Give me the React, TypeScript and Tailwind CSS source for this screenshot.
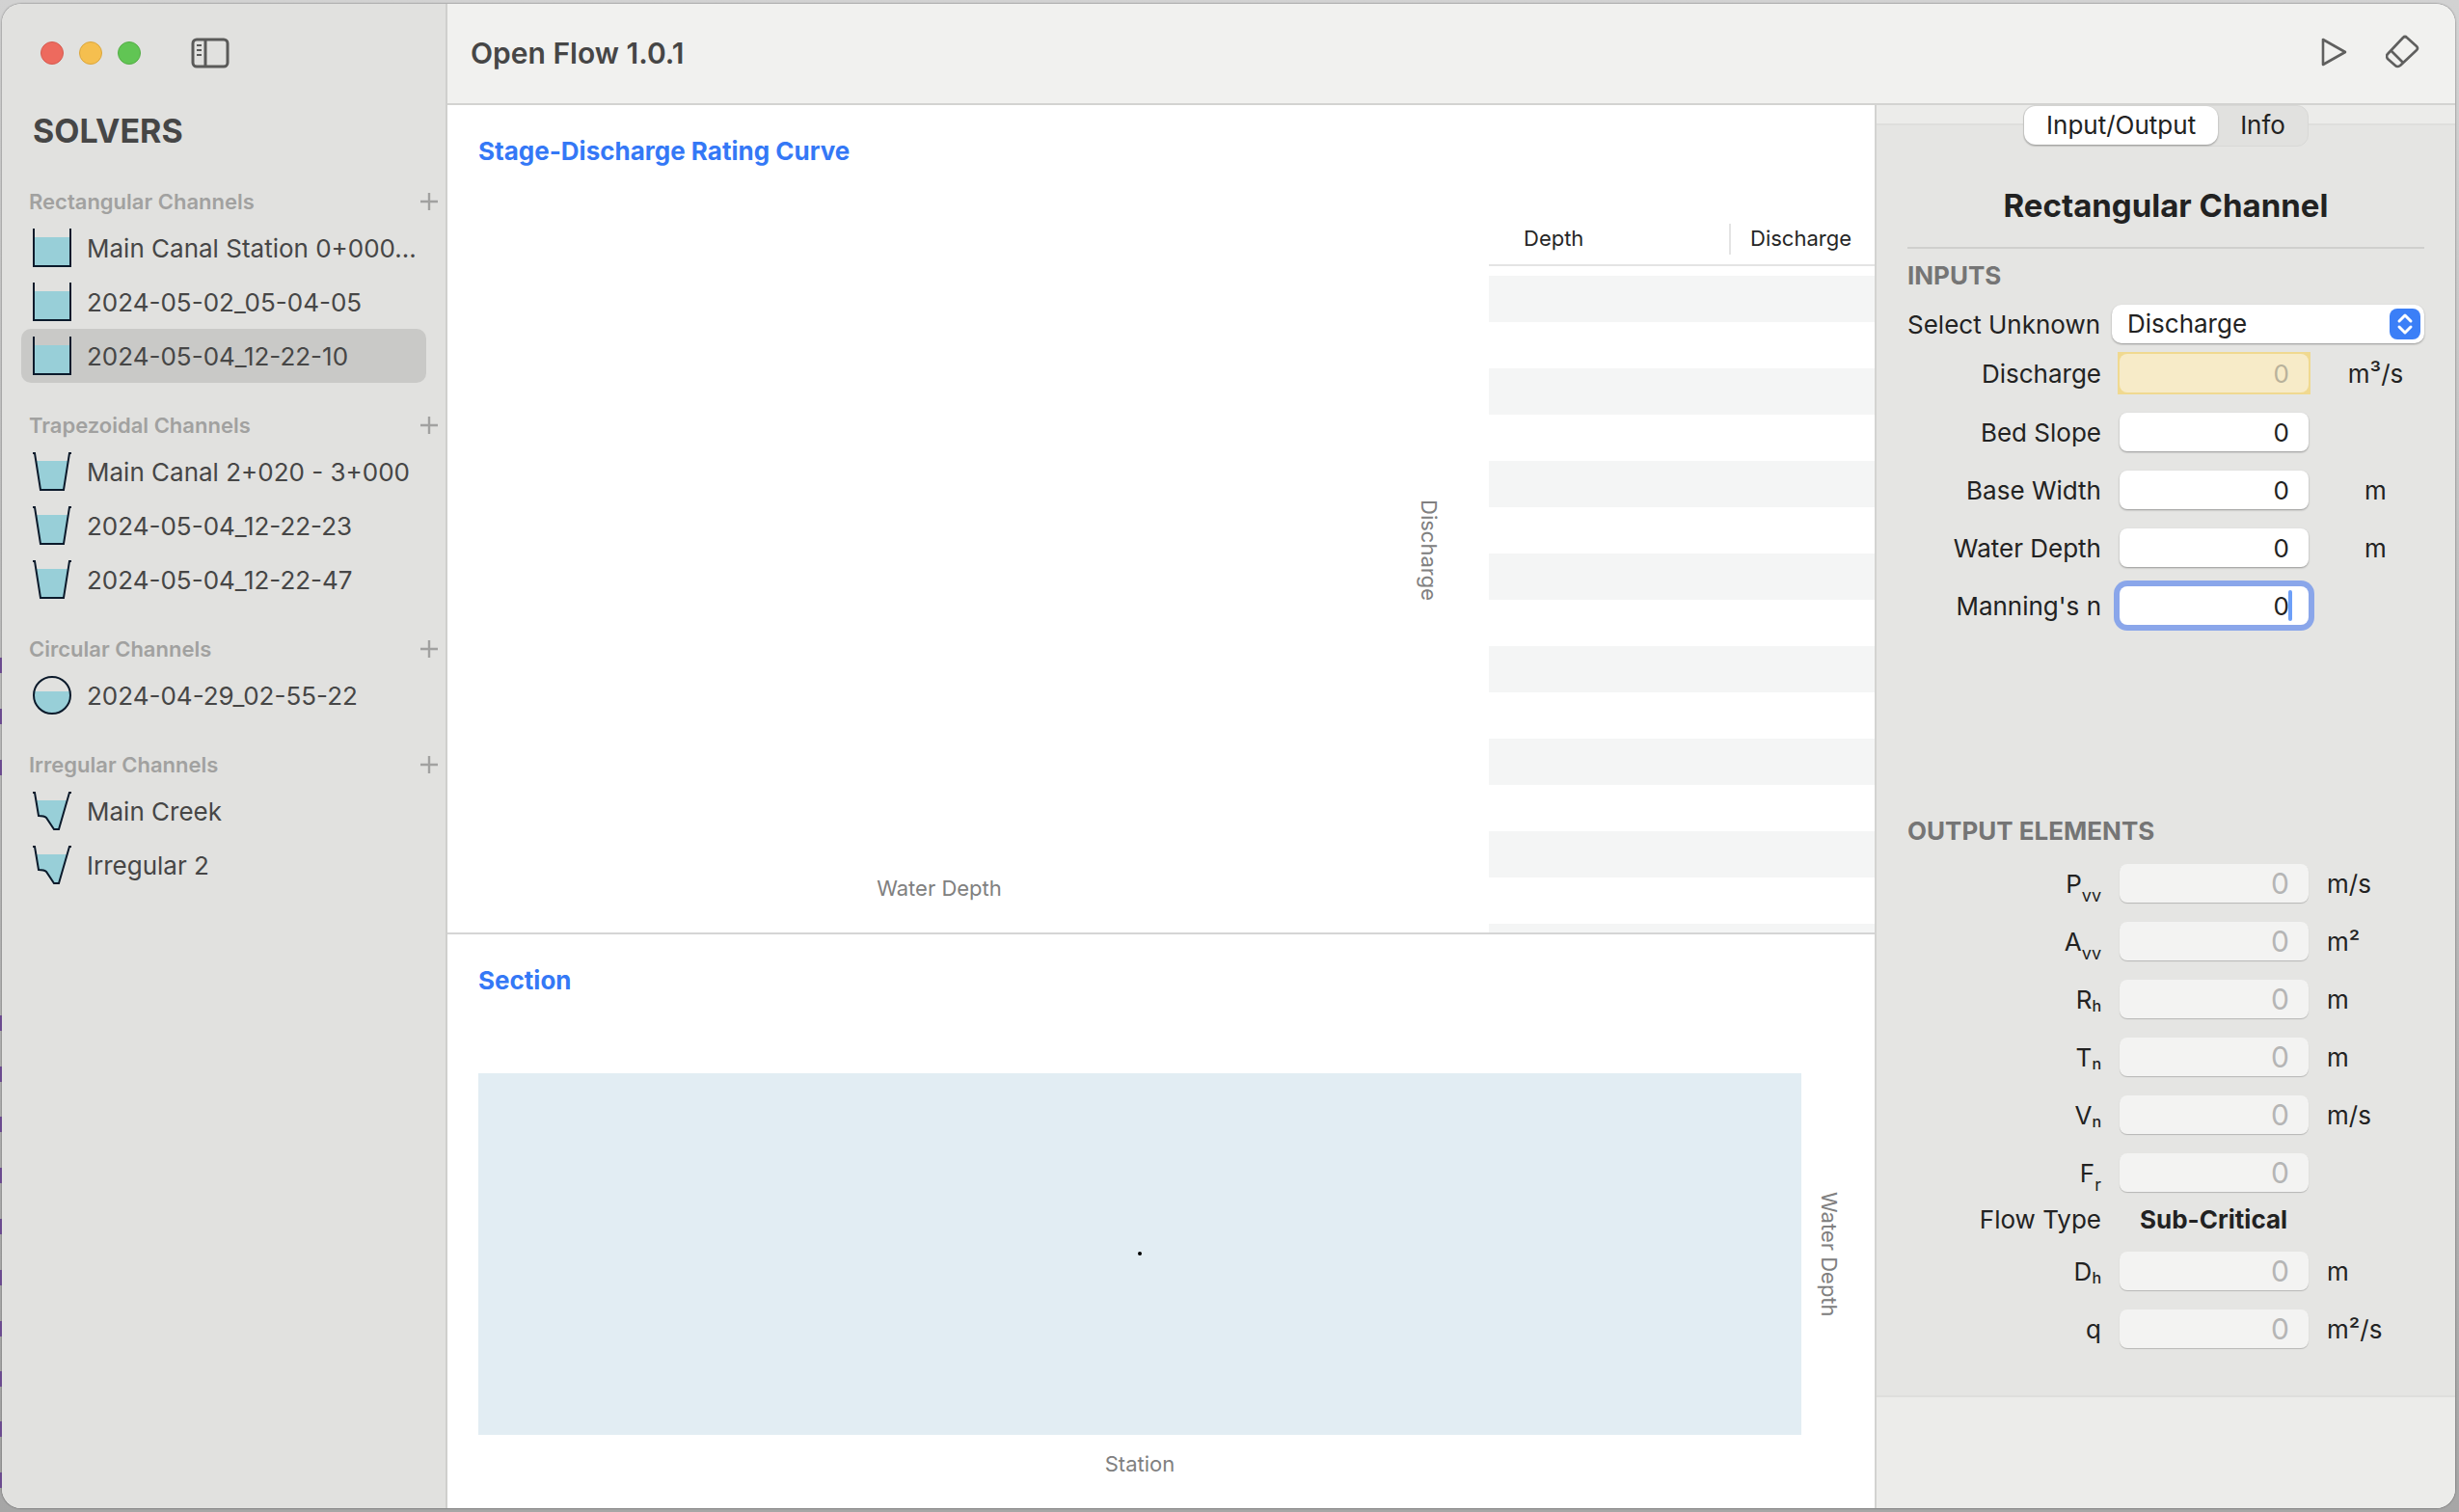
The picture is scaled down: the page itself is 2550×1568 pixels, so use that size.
import { useState } from 'react';
import type { ReactNode } from 'react';

type Shape = 'rect' | 'trapezoid' | 'circle' | 'irregular';

const groups: { title: string; shape: Shape; items: string[] }[] = [
  {
    title: 'Rectangular Channels',
    shape: 'rect',
    items: ['Main Canal Station 0+000...', '2024-05-02_05-04-05', '2024-05-04_12-22-10'],
  },
  {
    title: 'Trapezoidal Channels',
    shape: 'trapezoid',
    items: ['Main Canal 2+020 - 3+000', '2024-05-04_12-22-23', '2024-05-04_12-22-47'],
  },
  { title: 'Circular Channels', shape: 'circle', items: ['2024-04-29_02-55-22'] },
  { title: 'Irregular Channels', shape: 'irregular', items: ['Main Creek', 'Irregular 2'] },
];

const inputs = [
  { id: 'bed-slope', label: 'Bed Slope', unit: '' },
  { id: 'base-width', label: 'Base Width', unit: 'm' },
  { id: 'water-depth', label: 'Water Depth', unit: 'm' },
  { id: 'manning', label: "Manning's n", unit: '' },
];

const low = 'relative top-[9px] text-[18px] leading-none';
const small = 'relative top-[3px] text-[16px] font-medium leading-none';

const outputs: { id: string; label: ReactNode; unit: string }[] = [
  { id: 'perimeter', label: <>P<span className={low}>vv</span></>, unit: 'm/s' },
  { id: 'area', label: <>A<span className={low}>vv</span></>, unit: 'm²' },
  { id: 'radius', label: <>R<span className={small}>h</span></>, unit: 'm' },
  { id: 'top-width', label: <>T<span className={small}>n</span></>, unit: 'm' },
  { id: 'velocity', label: <>V<span className={small}>n</span></>, unit: 'm/s' },
  { id: 'froude', label: <>F<span className={low}>r</span></>, unit: '' },
];

const moreOutputs: { id: string; label: ReactNode; unit: string }[] = [
  { id: 'hydraulic-depth', label: <>D<span className={small}>h</span></>, unit: 'm' },
  { id: 'unit-discharge', label: 'q', unit: 'm²/s' },
];

// slivers of the window behind, along the left edge
const slivers = [682, 735, 788, 1053, 1106, 1158, 1211, 1264, 1317, 1370, 1422, 1474, 1527];

function ChannelIcon({ shape }: { shape: Shape }) {
  return (
    <svg viewBox="0 0 40 40" className="size-10 shrink-0" fill="none" stroke="#0b1a2b" strokeWidth="2">
      {shape === 'rect' && (
        <>
          <path d="M1 9h38v30H1z" fill="#98cfd8" stroke="none" />
          <path d="M1 0v39h38V0" />
        </>
      )}
      {shape === 'trapezoid' && (
        <>
          <path d="M3 9h34l-5 30H8z" fill="#98cfd8" stroke="none" />
          <path d="M0 1h2l6 38h24l6-38h2" />
        </>
      )}
      {shape === 'circle' && (
        <>
          <path d="M1.4 16h37.2A19 19 0 1 1 1.4 16z" fill="#98cfd8" stroke="none" />
          <circle cx="20" cy="20" r="19" />
        </>
      )}
      {shape === 'irregular' && (
        <>
          <path d="M3 9h33l-9 30h-5l-9-12-7-2z" fill="#98cfd8" stroke="none" />
          <path d="M0 1h2l4 24c4 0 6 0 8 2l8 12h5L38 1h2" />
        </>
      )}
    </svg>
  );
}

function Sidebar() {
  const [selected, setSelected] = useState('2024-05-04_12-22-10');

  return (
    <aside className="flex w-[462px] shrink-0 flex-col border-r-2 border-[#cfcfcd] bg-[#e1e1df] text-[#464646]">
      <div className="flex h-[101px] items-center gap-4 pl-10">
        <span className="size-6 rounded-full border border-[#d55b50] bg-[#ed6a5e]" />
        <span className="size-6 rounded-full border border-[#dba63c] bg-[#f5bf4f]" />
        <span className="size-6 rounded-full border border-[#54ad45] bg-[#61c554]" />
        <button aria-label="Toggle sidebar" className="ml-9">
          <svg viewBox="0 0 40 32" className="h-8 w-10" fill="none" stroke="#5a5a59" strokeWidth="3">
            <rect x="2" y="2" width="36" height="28" rx="4" />
            <path d="M15 2v28" />
            <path d="M6 8h5M6 13h5M6 18h5" strokeWidth="2" />
          </svg>
        </button>
      </div>
      <h1 className="h-[84px] pt-1 pl-8 text-[34px] leading-[54px] font-bold">SOLVERS</h1>
      <nav className="flex flex-col gap-6">
        {groups.map((group) => (
          <section key={group.title}>
            <div className="flex h-10 items-center justify-between pr-2 pl-7 text-[#a1a1a0]">
              <h2 className="text-[22px] font-semibold">{group.title}</h2>
              <button aria-label={`Add to ${group.title}`}>
                <svg viewBox="0 0 18 18" className="size-[18px]" stroke="currentColor" strokeWidth="2.4">
                  <path d="M9 0v18M0 9h18" />
                </svg>
              </button>
            </div>
            <ul className="px-5">
              {group.items.map((item) => (
                <li key={item}>
                  <button
                    onClick={() => setSelected(item)}
                    className={`flex h-14 w-full items-center gap-4 rounded-[10px] pl-3 text-left text-[26px] whitespace-nowrap ${
                      item === selected ? 'bg-[#c9c9c7]' : ''
                    }`}
                  >
                    <ChannelIcon shape={group.shape} />
                    {item}
                  </button>
                </li>
              ))}
            </ul>
          </section>
        ))}
      </nav>
    </aside>
  );
}

function Toolbar() {
  return (
    <header className="flex h-[105px] shrink-0 items-center gap-10 border-b-2 border-[#d3d3d1] bg-[#f1f1ef] pr-9 pl-6">
      <h1 className="flex-1 text-[30px] font-semibold text-[#464646]">Open Flow 1.0.1</h1>
      <button aria-label="Run" className="pb-1">
        <svg viewBox="0 0 28 30" className="h-[30px] w-7" fill="none" stroke="#5f5f5e" strokeWidth="2.6" strokeLinejoin="round">
          <path d="M3 2v26l23-13z" />
        </svg>
      </button>
      <button aria-label="Clear" className="pb-1">
        <svg viewBox="0 0 36 36" className="size-9" fill="none" stroke="#5f5f5e" strokeWidth="2.6" strokeLinejoin="round">
          <path d="M18 3q2-2 4 0l10 9q2 2 0 4L15 32q-3 2-5 0l-8-7q-2-3 0-5zM6 17l12 12" />
        </svg>
      </button>
    </header>
  );
}

function RatingCurve() {
  const rows = Array.from({ length: 15 }, (_, i) => i);

  return (
    <section className="flex min-h-0 flex-[857] flex-col overflow-hidden pl-8">
      <h2 className="h-28 shrink-0 pt-7 text-[26px] leading-10 font-bold text-[#3478f6]">
        Stage-Discharge Rating Curve
      </h2>
      <div className="flex min-h-0 flex-1">
        <div className="flex flex-1 flex-col pt-[18px] pr-[34px] pb-7 text-[22px] text-[#808080]">
          <div className="flex flex-1">
            <div className="flex-1" />
            <div className="flex w-[58px] items-center justify-center">
              <span className="[writing-mode:vertical-rl]">Discharge</span>
            </div>
          </div>
          <p className="mr-[58px] text-center leading-9">Water Depth</p>
        </div>
        <div className="w-[400px] overflow-hidden">
          <table className="w-full table-fixed border-collapse text-left">
            <thead>
              <tr className="h-[54px] border-b-2 border-[#e4e4e4] text-[22px] text-[#262626]">
                <th className="w-[249px] pl-9 font-normal">Depth</th>
                <th className="font-normal">
                  <div className="flex h-8 items-center border-l-2 border-[#e4e4e4] pl-5">Discharge</div>
                </th>
              </tr>
            </thead>
            <tbody>
              <tr className="h-[11px]">
                <td colSpan={2} />
              </tr>
              {rows.map((row) => (
                <tr key={row} className="h-12 odd:bg-white even:bg-[#f4f5f5]">
                  <td />
                  <td />
                </tr>
              ))}
            </tbody>
          </table>
        </div>
      </div>
    </section>
  );
}

function SectionView() {
  return (
    <section className="flex min-h-0 flex-[579] flex-col border-t-2 border-[#d5d5d5] pr-5 pb-4 pl-8 text-[22px] text-[#808080]">
      <h2 className="h-[144px] shrink-0 pt-7 text-[26px] leading-10 font-bold text-[#3478f6]">Section</h2>
      <div className="flex flex-1">
        <div className="flex flex-1 items-center justify-center bg-[#e2edf3]">
          <span className="size-1 rounded-full bg-black" />
        </div>
        <div className="flex w-14 items-center justify-center">
          <span className="[writing-mode:vertical-rl]">Water Depth</span>
        </div>
      </div>
      <p className="mr-14 text-center leading-[60px]">Station</p>
    </section>
  );
}

const field = 'h-10 w-[196px] rounded-lg pr-5 text-right outline-none';

function OutputRow({ id, label, unit }: { id: string; label: ReactNode; unit: string }) {
  return (
    <div className="flex h-[60px] items-center">
      <label htmlFor={id} className="w-[201px] text-right">
        {label}
      </label>
      <input
        id={id}
        value="0"
        disabled
        className={`${field} mx-[19px] bg-[#f3f3f2] text-[30px] text-[#b5b5b5] shadow-[0_1px_1px_rgba(0,0,0,0.2)]`}
      />
      <span>{unit}</span>
    </div>
  );
}

function Inspector() {
  const [values, setValues] = useState<Record<string, string>>({});

  return (
    <aside className="flex w-[602px] shrink-0 flex-col border-l-2 border-[#d3d3d1] bg-[#ececea] text-[26px] text-[#222]">
      <div className="flex flex-1 flex-col">
        <div className="z-10 -mb-6 flex h-[43px] items-start self-center rounded-xl border border-[#d8d8d6] bg-[#e1e1df]">
          <button className="h-10 rounded-xl bg-white px-[23px] pb-0.5 shadow-[0_1px_2px_rgba(0,0,0,0.35)]">
            Input/Output
          </button>
          <button className="h-10 px-[23px] pb-0.5">Info</button>
        </div>
        <div className="h-[1321px] border-y-2 border-[#dededc] bg-[#e5e5e3] px-8">
          <h2 className="mt-[58px] border-b-2 border-[#cfcfcd] pb-[18px] text-center text-[33px] leading-[50px] font-bold">
            Rectangular Channel
          </h2>
          <h3 className="mt-2 leading-10 font-bold text-[#757575]">INPUTS</h3>
          <div className="mt-2.5 flex items-center justify-between">
            <label htmlFor="unknown">Select Unknown</label>
            <div className="relative h-10 w-[324px]">
              <select
                id="unknown"
                className="h-10 w-full appearance-none rounded-[10px] bg-white px-4 pb-0.5 shadow-[0_1px_2px_rgba(0,0,0,0.35)]"
              >
                <option>Discharge</option>
                <option>Bed Slope</option>
                <option>Base Width</option>
                <option>Water Depth</option>
              </select>
              <svg viewBox="0 0 32 32" className="pointer-events-none absolute top-1 right-1 size-8" fill="none">
                <rect width="32" height="32" rx="8" fill="#3b7ff7" />
                <path
                  d="M10 13l6-6 6 6M10 19l6 6 6-6"
                  stroke="white"
                  strokeWidth="3"
                  strokeLinecap="round"
                  strokeLinejoin="round"
                />
              </svg>
            </div>
          </div>
          <div className="flex h-[62px] items-center">
            <label htmlFor="discharge" className="w-[201px] text-right">
              Discharge
            </label>
            <div className="mx-[17px] bg-[#f0d990] p-0.5">
              <input id="discharge" value="0" disabled className={`${field} block bg-[#f7ebc8] text-[#b9b29b]`} />
            </div>
            <span className="flex-1 text-center">m³/s</span>
          </div>
          {inputs.map(({ id, label, unit }) => (
            <div key={id} className="flex h-[60px] items-center">
              <label htmlFor={id} className="w-[201px] text-right">
                {label}
              </label>
              <div className="relative mx-[19px]">
                <input
                  id={id}
                  value={values[id] ?? '0'}
                  onChange={(e) => setValues({ ...values, [id]: e.target.value })}
                  className={`${field} block bg-white ${
                    id === 'manning' ? 'ring-[6px] ring-[#8aa6ea]' : 'shadow-[0_1px_2px_rgba(0,0,0,0.35)]'
                  }`}
                />
                {id === 'manning' && <span className="absolute top-1 right-[17px] h-8 w-1 rounded-full bg-[#6d9ff8]" />}
              </div>
              <span className="flex-1 text-center">{unit}</span>
            </div>
          ))}
          <h3 className="mt-[184px] mb-1 leading-10 font-bold text-[#757575]">OUTPUT ELEMENTS</h3>
          {outputs.map((row) => (
            <OutputRow key={row.id} {...row} />
          ))}
          <div className="flex h-9 items-center">
            <span className="w-[201px] text-right">Flow Type</span>
            <strong className="ml-10">Sub-Critical</strong>
          </div>
          <div className="pt-1.5">
            {moreOutputs.map((row) => (
              <OutputRow key={row.id} {...row} />
            ))}
          </div>
        </div>
      </div>
    </aside>
  );
}

export default function App() {
  return (
    <div className="relative h-screen overflow-hidden bg-linear-to-b from-[#d2d2d2] to-[#a6a6a6] pt-1 pr-1 pb-1 pl-0.5 font-[Inter,'Liberation_Sans',sans-serif]">
      {slivers.map((top) => (
        <span key={top} className="absolute left-0 h-4 w-0.5 bg-[#6b4b8f]" style={{ top }} />
      ))}
      <div className="flex h-full overflow-hidden rounded-[20px] bg-white shadow-[0_0_2px_rgba(0,0,0,0.6)]">
        <Sidebar />
        <div className="flex min-w-0 flex-1 flex-col">
          <Toolbar />
          <div className="flex min-h-0 flex-1">
            <main className="flex min-w-0 flex-1 flex-col">
              <RatingCurve />
              <SectionView />
            </main>
            <Inspector />
          </div>
        </div>
      </div>
    </div>
  );
}
